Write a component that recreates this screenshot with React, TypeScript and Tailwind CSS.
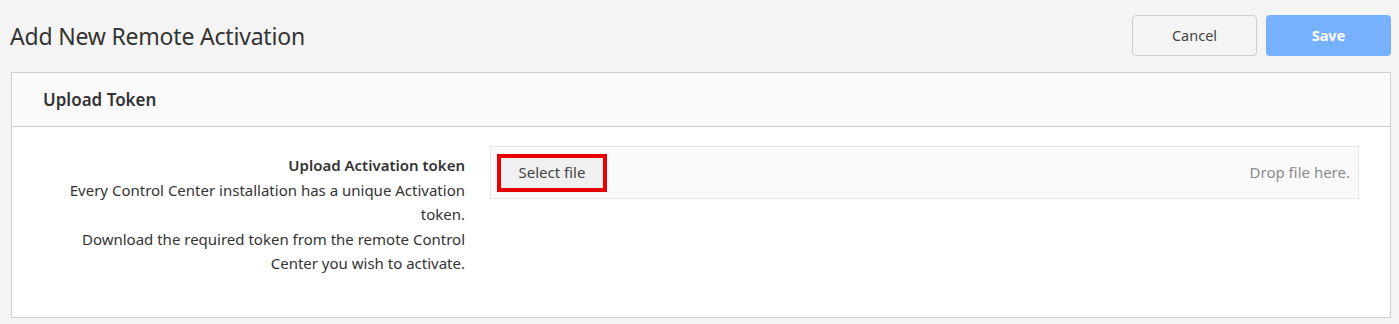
export default function App() {
  return (
    <div
      className="w-[1399px] h-[324px] bg-[#f4f4f4] pl-[11px] pr-[8px] overflow-hidden"
      style={{ fontFamily: '"Noto Sans", "Open Sans", sans-serif' }}
    >
      <div className="h-[72px] flex items-center justify-between">
        <h1 className="-ml-[1px] text-[23px] text-[#333] font-normal tracking-[-0.2px]">Add New Remote Activation</h1>
        <div className="flex items-center gap-[9px] -mt-[1px]">
          <button className="w-[125px] h-[41px] rounded-[4px] border border-[#cfcfcf] bg-[#f4f4f4] text-[14.5px] text-[#444]">
            Cancel
          </button>
          <button className="w-[125px] h-[41px] rounded-[4px] bg-[#77b0fd] text-[14.5px] font-bold text-white">
            Save
          </button>
        </div>
      </div>
      <div className="border border-[#cfcfcf] bg-white">
        <div className="h-[54px] bg-[#fafafa] border-b border-[#cfcfcf] flex items-center pl-[31px]">
          <span className="text-[17px] font-semibold text-[#333]">Upload Token</span>
        </div>
        <div className="flex pt-[19px] pb-[41px] pr-[31px]">
          <div className="w-[453px] shrink-0 text-right text-[15px] leading-[24.5px] text-[#333] pt-[7px]">
            <div className="font-semibold">Upload Activation token</div>
            <div className="pl-[40px]">Every Control Center installation has a unique Activation token.</div>
            <div className="pl-[40px]">Download the required token from the remote Control Center you wish to activate.</div>
          </div>
          <div className="ml-[25px] flex-1 h-[53px] border border-[#e6e6e6] bg-[#fafafa] flex items-center justify-between pl-[6px] pr-[8px]">
            <div className="border-[4px] border-[#e60000]">
              <div className="w-[102px] h-[30px] bg-[#f0f0f0] flex items-center justify-center text-[15px] text-[#444]">
                Select file
              </div>
            </div>
            <span className="text-[15px] text-[#8a8a8a]">Drop file here.</span>
          </div>
        </div>
      </div>
    </div>
  );
}
